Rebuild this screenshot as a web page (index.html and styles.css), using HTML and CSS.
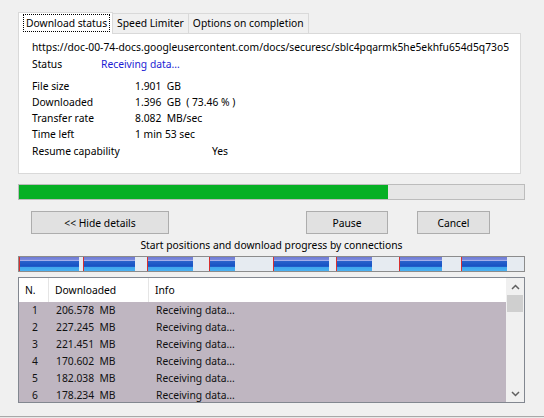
FILE: index.html
```html
<!DOCTYPE html>
<html lang="en">
<head>
    <meta charset="UTF-8">
    <title>Download status</title>
    <link rel="stylesheet" href="styles.css">
</head>
<body>
    <div class="dialog">
        <div class="tabs">
            <div class="tab active"><span class="focus">Download status</span></div>
            <div class="tab">Speed Limiter</div>
            <div class="tab">Options on completion</div>
        </div>

        <div class="panel">
            <div class="url">https://doc-00-74-docs.googleusercontent.com/docs/securesc/sblc4pqarmk5he5ekhfu654d5q73o5</div>
            <div class="status-row">
                <span class="status-label">Status</span>
                <span class="status-value">Receiving data...</span>
            </div>
            <div class="info">
                <div>File size</div><div>1.901&nbsp; GB</div>
                <div>Downloaded</div><div>1.396&nbsp; GB&nbsp; ( 73.46 % )</div>
                <div>Transfer rate</div><div>8.082&nbsp; MB/sec</div>
                <div>Time left</div><div>1 min 53 sec</div>
                <div class="resume">Resume capability</div><div class="resume yes">Yes</div>
            </div>
        </div>

        <div class="progress">
            <div class="progress-fill" style="width: 73%"></div>
        </div>

        <div class="buttons">
            <button class="btn btn-details">&lt;&lt; Hide details</button>
            <button class="btn btn-pause">Pause</button>
            <button class="btn btn-cancel">Cancel</button>
        </div>

        <div class="caption">Start positions and download progress by connections</div>

        <div class="conn-bar">
            <div class="conn" style="width: 64px"><div class="done" style="width: 59px"></div></div>
            <div class="conn" style="width: 64px"><div class="done" style="width: 51px"></div></div>
            <div class="conn" style="width: 62px"><div class="done" style="width: 45px"></div></div>
            <div class="conn" style="width: 64px"><div class="done" style="width: 25px"></div></div>
            <div class="conn" style="width: 63px"><div class="done" style="width: 55px"></div></div>
            <div class="conn" style="width: 63px"><div class="done" style="width: 35px"></div></div>
            <div class="conn" style="width: 62px"><div class="done" style="width: 42px"></div></div>
            <div class="conn" style="width: 63px"><div class="done" style="width: 45px"></div></div>
        </div>

        <div class="conn-list">
            <div class="list">
                <div class="list-head">
                    <div>N.</div>
                    <div>Downloaded</div>
                    <div>Info</div>
                </div>
                <div class="list-row"><div>1</div><div>206.578&nbsp; MB</div><div>Receiving data...</div></div>
                <div class="list-row"><div>2</div><div>227.245&nbsp; MB</div><div>Receiving data...</div></div>
                <div class="list-row"><div>3</div><div>221.451&nbsp; MB</div><div>Receiving data...</div></div>
                <div class="list-row"><div>4</div><div>170.602&nbsp; MB</div><div>Receiving data...</div></div>
                <div class="list-row"><div>5</div><div>182.038&nbsp; MB</div><div>Receiving data...</div></div>
                <div class="list-row"><div>6</div><div>178.234&nbsp; MB</div><div>Receiving data...</div></div>
            </div>
            <div class="scrollbar">
                <div class="arrow">
                    <svg width="9" height="6" viewBox="0 0 9 6"><path d="M1 5 L4.5 1.5 L8 5" fill="none" stroke="#606060" stroke-width="1.5"/></svg>
                </div>
                <div class="thumb"></div>
                <div class="track"></div>
                <div class="arrow">
                    <svg width="9" height="6" viewBox="0 0 9 6"><path d="M1 1 L4.5 4.5 L8 1" fill="none" stroke="#606060" stroke-width="1.5"/></svg>
                </div>
            </div>
        </div>
    </div>
    <div class="bottom-edge"></div>
</body>
</html>
```

FILE: styles.css
```css
* {
    box-sizing: border-box;
}

body {
    margin: 0;
    background: #f0f0f0;
    font-family: "Noto Sans", "Open Sans", sans-serif;
    font-size: 10.3px;
    color: #000;
    overflow: hidden;
}

.dialog {
    width: 507px;
    margin-left: 18px;
    padding-top: 12px;
}

/* tabs */

.tabs {
    display: flex;
    align-items: flex-end;
    height: 21px;
}

.tab {
    height: 20px;
    line-height: 18px;
    padding: 0 4px;
    border: 1px solid #d9d9d9;
    border-bottom: none;
    background: #f0f0f0;
    margin-left: -1px;
    white-space: nowrap;
}

.tab:first-child {
    margin-left: 0;
}

.tab.active {
    position: relative;
    z-index: 1;
    height: 22px;
    margin-bottom: -1px;
    padding: 1px 2px 0 4px;
    background: #fff;
}

.focus {
    display: inline-block;
    line-height: 16px;
    padding: 0 2px;
    border: 1px dotted #000;
}

.panel {
    width: 503px;
    height: 141px;
    background: #fff;
    border: 1px solid #d9d9d9;
    padding: 5px 11px 0 13px;
}

.url {
    line-height: 16px;
    white-space: nowrap;
    overflow: hidden;
}

.status-row {
    display: flex;
    line-height: 16px;
    margin-top: 1px;
}

.status-label {
    width: 69px;
}

.status-value {
    color: #1c1cd4;
}

.info {
    display: grid;
    grid-template-columns: 103px 1fr;
    line-height: 16px;
    margin-top: 6px;
}

.info .resume {
    margin-top: 1px;
}

.info .yes {
    padding-left: 77px;
}

/* overall progress */

.progress {
    height: 16px;
    margin-top: 10px;
    border: 1px solid #bcbcbc;
    background: #e6e6e6;
}

.progress-fill {
    height: 100%;
    background: #06b025;
}

.buttons {
    display: flex;
    margin-top: 11px;
    padding: 0 35px 0 13px;
}

.btn {
    height: 23px;
    padding: 0;
    border: 1px solid #adadad;
    background: #e1e1e1;
    font-family: inherit;
    font-size: 10.3px;
    color: #000;
}

.btn-details {
    width: 138px;
}

.btn-pause {
    width: 82px;
    margin-left: auto;
}

.btn-cancel {
    width: 73px;
    margin-left: 29px;
}

.caption {
    margin-top: 3px;
    line-height: 16px;
    text-align: center;
}

/* per connection bar */

.conn-bar {
    display: flex;
    height: 16px;
    margin-top: 3px;
    border: 1px solid #8c8c8c;
    background: #e6ebf1;
}

.conn {
    display: flex;
    flex: none;
    height: 100%;
}

.conn::before {
    content: "";
    flex: none;
    width: 1px;
    background: #d83030;
}

.done {
    flex: none;
    height: 100%;
    background: linear-gradient(to bottom,
        #6d7ad4 0, #7e8bdd 3px, #a3aeea 3px, #a3aeea 4px, #2a62cc 4px,
        #1652c4 9px, #2c68cc 10px, #3fa6ec 10px, #4cb2f2 14px);
}

/* connections list */

.conn-list {
    display: flex;
    height: 126px;
    margin-top: 5px;
    border: 1px solid #828790;
    overflow: hidden;
}

.list {
    flex: 1;
    background: #bfb6c1;
}

.list-head,
.list-row {
    display: grid;
    grid-template-columns: 30px 100px 1fr;
    align-items: center;
}

.list-head {
    height: 24px;
    background: #fff;
}

.list-head div {
    padding-left: 6px;
    height: 100%;
    line-height: 24px;
    border-right: 1px solid #e5e5e5;
}

.list-head div:last-child {
    border-right: none;
}

.list-row {
    height: 17px;
    line-height: 17px;
    color: #111;
}

.list-row div {
    padding-left: 7px;
}

.list-row div:first-child {
    text-align: center;
    padding-left: 2px;
}

.scrollbar {
    width: 18px;
    display: flex;
    flex-direction: column;
    background: #f0f0f0;
}

.arrow {
    height: 17px;
    display: flex;
    align-items: center;
    justify-content: center;
}

.thumb {
    height: 17px;
    margin: 0 1px;
    background: #cfcfcf;
}

.track {
    flex: 1;
}

.bottom-edge {
    margin-top: 13px;
    height: 2px;
    border-top: 1px solid #a8a8a8;
    background: #e8e8e8;
}
```
